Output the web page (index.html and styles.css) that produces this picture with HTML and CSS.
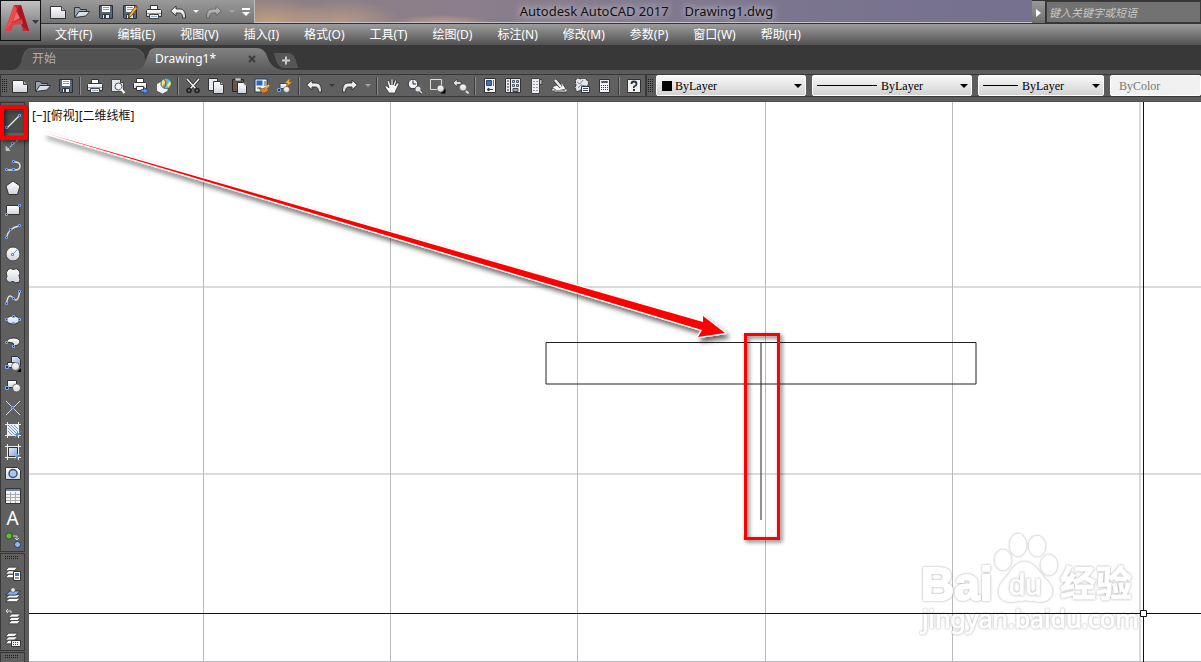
FILE: index.html
```html
<!DOCTYPE html>
<html lang="zh-CN">
<head>
<meta charset="utf-8">
<title>Autodesk AutoCAD 2017 - Drawing1.dwg</title>
<link rel="stylesheet" href="styles.css">
</head>
<body>
<svg class="sprite" aria-hidden="true">
  <defs>
    <linearGradient id="lg" x1="0" y1="0" x2="0" y2="1"><stop offset="0" stop-color="#fff"/><stop offset="1" stop-color="#cfd4dd"/></linearGradient>
    <linearGradient id="bl" x1="0" y1="0" x2="1" y2="1"><stop offset="0" stop-color="#e8f0fb"/><stop offset="1" stop-color="#7fa4dc"/></linearGradient>
  </defs>
  <symbol id="new" viewBox="0 0 16 16"><path d="M.5 2.500h11l4 4v8H.5z" fill="url(#lg)" stroke="#333"/><path d="M11.500 2.500v4h4" fill="#aaa" stroke="#444"/></symbol>
  <symbol id="open" viewBox="0 0 16 16"><path d="M.5 13V3.500h5l1 2h6v3" fill="#9da5b1" stroke="#30343a"/><path d="M.8 13.500l4-6h11l-4 4.500z" fill="#d9dfe8" stroke="#30343a"/></symbol>
  <symbol id="save" viewBox="0 0 16 16"><path d="M1.500 1.500h13v13h-12l-1-1z" fill="#596477" stroke="#292e37"/><path d="M4 2h8v6H4z" fill="#fff"/><path d="M5 3.500h6M5 5.500h6" stroke="#8e9cae"/><path d="M4.500 10.500h7v4h-7z" fill="#e5e9ef" stroke="#323844"/><path d="M6 11h2v3H6z" fill="#333b49"/></symbol>
  <symbol id="saveas" viewBox="0 0 16 16"><use href="#save" width="16" height="16"/><path d="M7 11l6.500-9 2.300 1.700L9 12.500l-2.500 1z" fill="#f4b33d" stroke="#643c12" stroke-width=".8"/><path d="M12.700 3l1.300-2 2 1.600-1.300 1.700z" fill="#c8442c"/></symbol>
  <symbol id="print" viewBox="0 0 16 16"><path d="M4.500 6V1.500h7V6" fill="#fff" stroke="#333"/><path d="M.5 6.500l1-1h13l1 1v6H.5z" fill="url(#lg)" stroke="#333"/><path d="M1 9.500h14" stroke="#8e96a3"/><path d="M3.500 10.500h9v4h-9z" fill="#eef3fa" stroke="#444"/><path d="M5 12.500h6" stroke="#8cacd8"/></symbol>
  <symbol id="preview" viewBox="0 0 16 16"><path d="M1.500 1.500h9l3 3v9h-12z" fill="#e3e6eb" stroke="#444"/><path d="M10.500 1.500v3h3" fill="#888" stroke="#333"/><circle cx="8.500" cy="8.500" r="3.500" fill="#edf3f9" stroke="#4c5157"/><path d="M11 11l3.500 4" stroke="#fff" stroke-width="2"/></symbol>
  <symbol id="publish" viewBox="0 0 16 16"><path d="M3.500 5V.5h7V5" fill="#fff" stroke="#333"/><path d="M.5 5.500l1-1h11l1 1v5H.5z" fill="url(#lg)" stroke="#333"/><path d="M3.500 8.500h7v4h-7z" fill="#fff" stroke="#333"/><path d="M8 11.500h3V9.500l4.500 3.500-4.500 3v-2H8z" fill="#5b95ed" stroke="#173e7b" stroke-width=".7"/></symbol>
  <symbol id="globe" viewBox="0 0 16 16"><path d="M.5 6l5-3 6.500 3v7l-5.500 3-6-3z" fill="#f3f5f8" stroke="#444" stroke-width=".7"/><circle cx="10" cy="5.500" r="5.200" fill="#4cc6d9" stroke="#31576d" stroke-width=".6"/><path d="M6 3q3-3 4-1l-1 3-3 3zm5 4l3-4 1 3-3 4z" fill="#ffe35a"/><path d="M8 1q4 4 0 9" fill="none" stroke="#e4472b" stroke-width="1.400"/></symbol>
  <symbol id="cut" viewBox="0 0 16 16"><path d="M2 1l9 10M14 1L5 11" stroke="#222" stroke-width="3"/><path d="M2 1l9 10M14 1L5 11" stroke="#eee" stroke-width="1.600"/><circle cx="4" cy="12.500" r="2" fill="none" stroke="#222" stroke-width="1.600"/><circle cx="12" cy="12.500" r="2" fill="none" stroke="#222" stroke-width="1.600"/></symbol>
  <symbol id="copy" viewBox="0 0 16 16"><path d="M.5.5h9v12h-9z" fill="#e8ebf0" stroke="#333"/><path d="M5.500 3.500h7l3 3v9h-10z" fill="url(#lg)" stroke="#333"/><path d="M12.500 3.500v3h3" fill="#bbb" stroke="#555"/></symbol>
  <symbol id="paste" viewBox="0 0 16 16"><path d="M1.500 1.500h11v12h-11z" fill="#665847" stroke="#28231f"/><path d="M4 0h6v3H4z" fill="#c8ccd2" stroke="#333" stroke-width=".6"/><path d="M6.500 4.500h6l3 3v8h-9z" fill="url(#lg)" stroke="#333"/><path d="M12.500 4.500v3h3" fill="#bbb"/></symbol>
  <symbol id="match" viewBox="0 0 16 16"><path d="M1 1h12v13H1z" fill="#f1f4f8" stroke="#24394c"/><path d="M2.500 2.500h6v5h-6z" fill="#286ac4"/><path d="M11 3v5M3 10h4" stroke="#315a7b"/><path d="M5 10q4 2 7-1l3 3q-3 4-7 3z" fill="#d88429" stroke="#81400e" stroke-width=".7"/><path d="M12 10l3-3" stroke="#efb35b" stroke-width="2"/></symbol>
  <symbol id="blockedit" viewBox="0 0 16 16"><path d="M3 5.500h7v5H3z" fill="url(#lg)" stroke="#444"/><circle cx="9.500" cy="11.500" r="3" fill="url(#lg)" stroke="#555" stroke-width=".6"/><path d="M.5 10.500h3v3h-3z" fill="#273b59" stroke="#68a2f2"/><path d="M13 0L8 5l3 .5L9 9l6-5h-3z" fill="#ffb629" stroke="#a5580c" stroke-width=".4"/></symbol>
  <symbol id="undo" viewBox="0 0 16 16"><path d="M.7 7L6 2v3h4q5 0 5.500 7v2h-3q0-5-3-5H6v3z" fill="url(#lg)" stroke="#303030" stroke-width=".9"/></symbol>
  <symbol id="redo" viewBox="0 0 16 16"><path d="M15.300 7L10 2v3H6Q1 5 .5 12v2h3q0-5 3-5H10v3z" fill="url(#lg)" stroke="#303030" stroke-width=".9"/></symbol>
  <symbol id="hand" viewBox="0 0 16 16"><path d="M5 15L1 9q0-2 2-1l2 2-2-7q1-2 2 0l2 4V1q1-1 2 0v6l2-5q2-1 1.500 1L11 8l2-3q2-1 2 1l-3 6-1 3z" fill="#f6f7f9" stroke="#353535" stroke-width=".8"/></symbol>
  <symbol id="zoomtime" viewBox="0 0 16 16"><circle cx="6" cy="6" r="4.800" fill="#eef1f5" stroke="#303030"/><path d="M6 2.500V6h3" fill="none" stroke="#222"/><path d="M9 9l6 6" stroke="#333" stroke-width="3"/><circle cx="11" cy="11" r="2.500" fill="#e3e7ed"/><path d="M12 12l3 3" stroke="#ddd" stroke-width="1.500"/></symbol>
  <symbol id="zoomwin" viewBox="0 0 16 16"><path d="M.5 1.500h11v10H.5z" fill="none" stroke="#ddd"/><path d="M15.500 10.500v5h-5z" fill="#000"/><circle cx="10.500" cy="10.500" r="3.500" fill="url(#lg)" stroke="#444" stroke-width=".6"/></symbol>
  <symbol id="zoomprev" viewBox="0 0 16 16"><path d="M0 5l4-4v2.500h4v3H4V9z" fill="#ddd" stroke="#333" stroke-width=".7"/><circle cx="10" cy="9.500" r="3.500" fill="url(#lg)" stroke="#444" stroke-width=".6"/><path d="M13 13l2.500 2.500" stroke="#ddd" stroke-width="2"/></symbol>
  <symbol id="props" viewBox="0 0 16 16"><path d="M2.500.5h11v14h-11z" fill="#f3f4f7" stroke="#333"/><path d="M4.500 2.500h5v5h-5z" fill="#3971be" stroke="#244b7f"/><path d="M11.500 2v6" stroke="#49709c"/><path d="M5 11.500h6M5 11.500l2-1.500v3z" fill="none" stroke="#333"/></symbol>
  <symbol id="center" viewBox="0 0 16 16"><path d="M.5.5h15v14H.5z" fill="#e7eaf0" stroke="#333"/><path d="M5.500 1v13M2 3h2M2 6h2M2 9h2M2 12h2" stroke="#333"/><path d="M7.500 2.500h2v2h-2zM11.500 2.500h2v2h-2zM7.500 6.500h2v2h-2zM11.500 6.500h2v2h-2z" fill="#bdc5d0" stroke="#4b5665"/><path d="M8 10.500h5v3H8z" fill="#8fa2ba" stroke="#444"/></symbol>
  <symbol id="palette" viewBox="0 0 16 16"><path d="M3.500.5h8v15h-8z" fill="#eceef1" stroke="#444"/><path d="M12 1.500h2v5h-2" fill="#bbb" stroke="#444"/><path d="M5 3.500h5M5 6.500h5M5 9.500h5M5 12.500h5" stroke="#999" stroke-dasharray="2 1"/></symbol>
  <symbol id="sheets" viewBox="0 0 16 16"><path d="M0 11l9-4 7 4v3H4z" fill="#e1e5eb" stroke="#333" stroke-width=".8"/><path d="M1 9l10-4 4 6-9 2z" fill="#f7f8fa" stroke="#444" stroke-width=".8"/><path d="M4 2l6 7" stroke="#333" stroke-width="4"/><path d="M4 2l6 7" stroke="#eee" stroke-width="2.500"/><path d="M1 12.500h13" stroke="#999"/></symbol>
  <symbol id="markup" viewBox="0 0 16 16"><path d="M1 2l3-2 3 1 3-1 3 2 2 3-2 3-3 5-4-1-3 2-2-4 1-3z" fill="#e2e5e9" stroke="#333" stroke-dasharray="3 1"/><path d="M3 4l3 2 3-4M4 10l3-3 5 1" stroke="#888" fill="none"/><path d="M7.500 8.500h8v6h-8z" fill="#f3f5f7" stroke="#333"/><path d="M9 10.500h5M9 12.500h5" stroke="#3e5267"/></symbol>
  <symbol id="calc" viewBox="0 0 16 16"><path d="M2.500 1.500h10v13h-10z" fill="#f0f1f4" stroke="#333"/><path d="M4.500 3.500h6v1h-6z" fill="#777" stroke="#555"/><path d="M4 7.500h7M4 9.500h7M4 11.500h7" stroke="#444" stroke-dasharray="1 1"/></symbol>
  <symbol id="help" viewBox="0 0 16 16"><path d="M1.500 1.500h13v13h-13z" fill="#eef0f3" stroke="#333"/><path d="M5.500 6q0-2.500 2.500-2.500T10.500 6q0 1.500-1.500 2T8 10" fill="none" stroke="#263240" stroke-width="1.800"/><path d="M7 11h2v2H7z" fill="#263240"/></symbol>

  <symbol id="line" viewBox="0 0 16 16"><path d="M2 14L14 2" stroke="#eee" stroke-width="1.300"/><path d="M.5 12.500h2v2h-2zM13.500.5h2v2h-2z" fill="#28466e" stroke="#76a7ef"/></symbol>
  <symbol id="ray" viewBox="0 0 16 16"><path d="M2 14L15 2" stroke="#ddd" stroke-dasharray="3 1"/><path d="M1 10.500v4h4z" fill="#ccc" stroke="#bbb"/><path d="M12 1.500h2.500V4" fill="none" stroke="#ccc"/><path d="M6.500 6.500h2v2h-2z" fill="#17365f" stroke="#76a7ef"/></symbol>
  <symbol id="poly" viewBox="0 0 16 16"><path d="M1 12h9q5 0 5-4t-5-4H8" fill="none" stroke="#ddd" stroke-width="1.500"/><path d="M.5 10.500h2v2h-2zM7.500 10.500h2v2h-2zM7.500 2.500h2v2h-2z" fill="#17365f" stroke="#76a7ef"/></symbol>
  <symbol id="penta" viewBox="0 0 16 16"><path d="M8 1l7 5-2.500 8.500h-9L1 6z" fill="url(#lg)" stroke="#333"/></symbol>
  <symbol id="rect" viewBox="0 0 16 16"><path d="M1.500 3.500h13v9h-13z" fill="url(#lg)" stroke="#333"/><path d="M.5 11.500h2v2h-2zM13.500 2.500h2v2h-2z" fill="#17365f" stroke="#76a7ef"/></symbol>
  <symbol id="arc" viewBox="0 0 16 16"><path d="M1.500 14Q3 4 14 2" fill="none" stroke="#ddd" stroke-width="1.500"/><path d="M.5 12.500h2v2h-2zM4.500 4.500h2v2h-2zM13.500.5h2v2h-2z" fill="#17365f" stroke="#76a7ef"/></symbol>
  <symbol id="circle" viewBox="0 0 16 16"><circle cx="8" cy="8" r="7" fill="url(#lg)" stroke="#444"/><path d="M8 8l4-4" stroke="#568ee0"/><path d="M6.500 7.500h2v2h-2z" fill="#fff" stroke="#568ee0"/></symbol>
  <symbol id="cloud" viewBox="0 0 16 16"><path d="M3 1.500q3-2 5 0 4-2 6 1 2 3 0 5 2 5 0 7-4 1-6-1-4 2-6-.5-2-2.500 0-4.500-2-4 1-7z" fill="url(#lg)" stroke="#333"/></symbol>
  <symbol id="spline" viewBox="0 0 16 16"><path d="M1.500 14Q3 2 8 8t6.500-6" fill="none" stroke="#ddd" stroke-width="1.500"/><path d="M.5 12.500h2v2h-2zM7.500 7.500h2v2h-2zM13.500.5h2v2h-2z" fill="#17365f" stroke="#76a7ef"/></symbol>
  <symbol id="ellipse" viewBox="0 0 16 16"><ellipse cx="8" cy="8" rx="6.500" ry="4" fill="url(#lg)" stroke="#333"/><path d="M.5 6.500h2v2h-2zM13.500 6.500h2v2h-2zM7.500 3.500h2v2h-2zM7.500 10.500h2v1h-2z" fill="#17365f" stroke="#76a7ef"/></symbol>
  <symbol id="ellarc" viewBox="0 0 16 16"><path d="M1.500 8q1-4 7-4t6.500 4q-1 4-6 4l-1-3z" fill="url(#lg)" stroke="#333"/><path d="M.5 7.500h2v2h-2zM7.500 11.500h2v2h-2z" fill="#17365f" stroke="#76a7ef"/></symbol>
  <symbol id="insert" viewBox="0 0 16 16"><path d="M6.500.5h6l3 3v7h-9z" fill="url(#bl)" stroke="#333"/><path d="M2.500 6.500h7v5h-7z" fill="url(#lg)" stroke="#333"/><circle cx="10.500" cy="10.500" r="4" fill="url(#lg)" stroke="#444" stroke-width=".7"/><path d="M.5 9.500h3v3h-3z" fill="#17365f" stroke="#76a7ef"/><path d="M16 12v4h-4z"/></symbol>
  <symbol id="block" viewBox="0 0 16 16"><path d="M2.500 2.500h9v7h-9z" fill="url(#lg)" stroke="#333"/><circle cx="11.500" cy="10" r="4" fill="url(#lg)" stroke="#444" stroke-width=".7"/><path d="M.5 8.500h3v3h-3z" fill="#17365f" stroke="#76a7ef"/></symbol>
  <symbol id="point" viewBox="0 0 16 16"><path d="M1 1l14 14M15 1L1 15" stroke="#ddd"/><path d="M6.500 6.500h2v2h-2z" fill="#38648c" stroke="#76a7ef"/></symbol>
  <symbol id="hatch" viewBox="0 0 16 16"><path d="M2.500 2.500h11v11h-11z" fill="#edf2fb" stroke="#333"/><path d="M3 3l10 10M6 3l7 7M3 6l7 7M9 3l4 4M3 9l4 4" stroke="#6d94d2"/><path d="M2.500 0v16M13.500 0v16M0 2.500h16M0 13.500h16" stroke="#ececec"/><path d="M9 16l7-7M12.500 10v5M10 12.500h5" stroke="#4d91e9"/></symbol>
  <symbol id="gradient" viewBox="0 0 16 16"><path d="M3.500 3.500h9v9h-9z" fill="url(#bl)" stroke="#333"/><path d="M2.500 0v16M13.500 0v16M0 2.500h16M0 13.500h16" stroke="#ececec"/><path d="M9 16l7-7M12.500 10v5M10 12.500h5" stroke="#4d91e9"/></symbol>
  <symbol id="region" viewBox="0 0 16 16"><path d="M.5 1.500h12l3 3v9H.5z" fill="url(#lg)" stroke="#333"/><circle cx="8" cy="7.500" r="4" fill="#a9c6ed" stroke="#344f78" stroke-width="1.500"/></symbol>
  <symbol id="table" viewBox="0 0 16 16"><path d="M.5.5h15v15H.5z" fill="#f2f4f6" stroke="#333"/><path d="M1 1h14v2H1z" fill="#6d84a6"/><path d="M1 6.500h14M1 9.500h14M1 12.500h14M5.500 4v11M10.500 4v11" stroke="#aaa"/></symbol>
  <symbol id="addsel" viewBox="0 0 16 16"><circle cx="4" cy="4" r="3.200" fill="#5ebc3a" stroke="#235714"/><path d="M8 4h4v4m-2-2l2 2 2-2" fill="none" stroke="#ccc"/><circle cx="12.500" cy="12.500" r="3" fill="#8bbdf6" stroke="#263a58"/></symbol>
  <symbol id="stack" viewBox="0 0 16 16" preserveAspectRatio="none"><path d="M.5 14.500l4-4h11l-4 4zM.5 10.500l4-4h11l-4 4zM.5 6.500l4-4h11l-4 4z" fill="#fafafa" stroke="#292929" stroke-width=".8"/></symbol>
  <symbol id="layprops" viewBox="0 0 16 16"><use href="#stack" width="13" height="14"/><path d="M8.500 6.500h7v9h-7z" fill="#fff" stroke="#333"/><path d="M10 8h4v3h-4z" fill="#3b79c8"/><path d="M10 13h4" stroke="#333"/></symbol>
  <symbol id="laycur" viewBox="0 0 16 16"><use href="#stack" y="2" width="16" height="14"/><path d="M1 8l4-4h10l-4 4z" fill="#7fb0ef" stroke="#243c60" stroke-width=".8"/><circle cx="8" cy="3" r="2.300" fill="#e6e6e6" stroke="#444" stroke-width=".6"/></symbol>
  <symbol id="layprev" viewBox="0 0 16 16"><use href="#stack" x="3" y="3" width="13" height="13"/><path d="M6 4V2H1m2-2L1 2l2 2" fill="none" stroke="#ddd"/></symbol>
  <symbol id="laystate" viewBox="0 0 16 16"><use href="#stack" width="13" height="14"/><path d="M6.500 9.500h9v6h-9z" fill="#f4f5f7" stroke="#333"/><path d="M8 11.500h6M8 13.500h6" stroke="#444" stroke-dasharray="1 1"/></symbol>
</svg>

<header class="header">
  <button class="app-button" aria-label="应用程序菜单">
    <svg width="36" height="34" viewBox="0 0 36 34"><path d="M2 27L11 1h7l8 26h-6l-2-8-8 1-2 7z" fill="#cb2630"/><path d="M11 1l3 4-6 17-6 5z" fill="#ed4b4e"/><path d="M14 5l4-4 8 26-7-5z" fill="#a91520"/><path d="M2 27l7-8 10-4 1 5-10 1-2 6zM10 17l4-10 3 7z" fill="#df4141"/><path d="M13 8l-3 10 7-4z" fill="#fff" opacity=".25"/><path d="M29 16h7l-3.500 4z" fill="#343c47"/></svg>
  </button>
  <div class="titlebar">
    <div class="quick">
      <button aria-label="新建"><svg class="icon"><use href="#new"/></svg></button>
      <button aria-label="打开"><svg class="icon"><use href="#open"/></svg></button>
      <button aria-label="保存"><svg class="icon"><use href="#save"/></svg></button>
      <button aria-label="另存为"><svg class="icon"><use href="#saveas"/></svg></button>
      <button aria-label="打印"><svg class="icon"><use href="#print"/></svg></button>
      <button aria-label="放弃"><svg class="icon"><use href="#undo"/></svg></button>
      <button class="drop light" aria-label="放弃列表"></button>
      <button class="faded" aria-label="重做"><svg class="icon"><use href="#redo"/></svg></button>
      <button class="drop dim" aria-label="重做列表"></button>
      <button class="more" aria-label="自定义快速访问工具栏"><svg width="8" height="8"><path d="M0 0h8v2H0zM0 4h8L4 8z" fill="#fff"/></svg></button>
    </div>
    <h1 class="title"><span>Autodesk AutoCAD 2017</span><span>Drawing1.dwg</span></h1>
    <div class="search">
      <button aria-label="展开搜索"><svg width="5" height="8"><path d="M0 0l5 4-5 4z" fill="#fff"/></svg></button>
      <input type="text" aria-label="搜索" placeholder="键入关键字或短语">
    </div>
  </div>
  <nav class="menu">
    <button>文件(F)</button><button>编辑(E)</button><button>视图(V)</button><button>插入(I)</button><button>格式(O)</button><button>工具(T)</button><button>绘图(D)</button><button>标注(N)</button><button>修改(M)</button><button>参数(P)</button><button>窗口(W)</button><button>帮助(H)</button>
  </nav>
</header>

<div class="tabs">
  <button class="tab"><svg class="tab-shape" viewBox="0 0 148 22" preserveAspectRatio="none"><path d="M0 22Q7 21 10 12L13 4Q15 0 20 0H122Q130 0 132 8L138 22Z" fill="#525252"/><path d="M10 12L13 4Q15 .5 20 .5H122Q130 1 132 8" fill="none" stroke="#606060"/></svg><span>开始</span></button>
  <button class="tab active"><svg class="tab-shape" viewBox="0 0 148 22" preserveAspectRatio="none"><defs><linearGradient id="tg" x1="0" y1="0" x2="0" y2="1"><stop offset="0" stop-color="#828282"/><stop offset="1" stop-color="#5c5c5c"/></linearGradient></defs><path d="M0 22Q7 21 9 12L12 4Q14 0 19 0H120Q127 0 130 8Q134 21 146 22Z" fill="url(#tg)"/></svg><span>Drawing1*</span><svg class="close" width="8" height="8"><path d="M1 1l6 6M7 1L1 7" stroke="#3c3c3c" stroke-width="2"/></svg></button>
  <button class="add" aria-label="新图形"><svg width="24" height="16"><path d="M0 0H14Q20 0 22 8L24 15H10Q3 15 0 0Z" fill="#565656"/><path d="M8 7.500h8M12 3.500v8" stroke="#ccc" stroke-width="2"/></svg></button>
</div>

<div class="toolbar">
  <div class="tools">
    <i class="grip"></i>
    <button aria-label="新建"><svg class="icon"><use href="#new"/></svg></button>
    <button aria-label="打开"><svg class="icon"><use href="#open"/></svg></button>
    <button aria-label="保存"><svg class="icon"><use href="#save"/></svg></button>
    <i class="sep"></i>
    <button aria-label="打印"><svg class="icon"><use href="#print"/></svg></button>
    <button aria-label="打印预览"><svg class="icon"><use href="#preview"/></svg></button>
    <button aria-label="发布"><svg class="icon"><use href="#publish"/></svg></button>
    <button aria-label="三维打印"><svg class="icon"><use href="#globe"/></svg></button>
    <i class="sep"></i>
    <button aria-label="剪切"><svg class="icon"><use href="#cut"/></svg></button>
    <button aria-label="复制"><svg class="icon"><use href="#copy"/></svg></button>
    <button aria-label="粘贴"><svg class="icon"><use href="#paste"/></svg></button>
    <button aria-label="特性匹配"><svg class="icon"><use href="#match"/></svg></button>
    <button aria-label="块编辑器"><svg class="icon"><use href="#blockedit"/></svg></button>
    <i class="sep"></i>
    <button aria-label="放弃"><svg class="icon"><use href="#undo"/></svg></button>
    <button class="drop" aria-label="放弃列表"></button>
    <button aria-label="重做"><svg class="icon"><use href="#redo"/></svg></button>
    <button class="drop dim" aria-label="重做列表"></button>
    <i class="sep"></i>
    <button aria-label="平移"><svg class="icon"><use href="#hand"/></svg></button>
    <button aria-label="实时缩放"><svg class="icon"><use href="#zoomtime"/></svg></button>
    <button aria-label="窗口缩放"><svg class="icon"><use href="#zoomwin"/></svg></button>
    <button aria-label="缩放上一个"><svg class="icon"><use href="#zoomprev"/></svg></button>
    <i class="sep"></i>
    <button aria-label="特性"><svg class="icon"><use href="#props"/></svg></button>
    <button aria-label="设计中心"><svg class="icon"><use href="#center"/></svg></button>
    <button aria-label="工具选项板"><svg class="icon"><use href="#palette"/></svg></button>
    <button aria-label="图纸集"><svg class="icon"><use href="#sheets"/></svg></button>
    <button aria-label="标记集"><svg class="icon"><use href="#markup"/></svg></button>
    <button aria-label="计算器"><svg class="icon"><use href="#calc"/></svg></button>
    <i class="sep"></i>
    <button aria-label="帮助"><svg class="icon"><use href="#help"/></svg></button>
  </div>
  <div class="properties">
    <i class="grip"></i>
    <label class="pick color"><i class="swatch"></i><select aria-label="颜色"><option>ByLayer</option></select></label>
    <label class="pick linetype"><i class="stroke"></i><select aria-label="线型"><option>ByLayer</option></select></label>
    <label class="pick weight"><i class="stroke"></i><select aria-label="线宽"><option>ByLayer</option></select></label>
    <label class="pick plot"><select aria-label="打印样式" disabled><option>ByColor</option></select></label>
  </div>
</div>

<main class="workspace">
  <aside class="side">
    <div class="panel">
      <i class="grip-h"></i>
      <button class="on" aria-label="直线"><svg class="icon"><use href="#line"/></svg></button>
      <button aria-label="构造线"><svg class="icon"><use href="#ray"/></svg></button>
      <button aria-label="多段线"><svg class="icon"><use href="#poly"/></svg></button>
      <button aria-label="多边形"><svg class="icon"><use href="#penta"/></svg></button>
      <button aria-label="矩形"><svg class="icon"><use href="#rect"/></svg></button>
      <button aria-label="圆弧"><svg class="icon"><use href="#arc"/></svg></button>
      <button aria-label="圆"><svg class="icon"><use href="#circle"/></svg></button>
      <button aria-label="修订云线"><svg class="icon"><use href="#cloud"/></svg></button>
      <button aria-label="样条曲线"><svg class="icon"><use href="#spline"/></svg></button>
      <button aria-label="椭圆"><svg class="icon"><use href="#ellipse"/></svg></button>
      <button aria-label="椭圆弧"><svg class="icon"><use href="#ellarc"/></svg></button>
      <button aria-label="插入块"><svg class="icon"><use href="#insert"/></svg></button>
      <button aria-label="创建块"><svg class="icon"><use href="#block"/></svg></button>
      <button aria-label="点"><svg class="icon"><use href="#point"/></svg></button>
      <button aria-label="图案填充"><svg class="icon"><use href="#hatch"/></svg></button>
      <button aria-label="渐变色"><svg class="icon"><use href="#gradient"/></svg></button>
      <button aria-label="面域"><svg class="icon"><use href="#region"/></svg></button>
      <button aria-label="表格"><svg class="icon"><use href="#table"/></svg></button>
      <button class="letter" aria-label="多行文字">A</button>
      <button aria-label="添加选定对象"><svg class="icon"><use href="#addsel"/></svg></button>
    </div>
    <div class="panel">
      <i class="grip-h"></i>
      <button aria-label="图层特性"><svg class="icon"><use href="#layprops"/></svg></button>
      <button aria-label="置为当前"><svg class="icon"><use href="#laycur"/></svg></button>
      <button aria-label="上一个图层"><svg class="icon"><use href="#layprev"/></svg></button>
      <button aria-label="图层状态"><svg class="icon"><use href="#laystate"/></svg></button>
    </div>
    <div class="panel"><i class="grip-h"></i><button aria-label="更多"></button></div>
    <div class="highlight"></div>
  </aside>
  <section class="canvas">
    <svg class="drawing" role="img" aria-label="图形">
      <defs><filter id="sh" x="-20%" y="-20%" width="140%" height="140%"><feDropShadow dx="3" dy="4" stdDeviation="2.500" flood-color="#000" flood-opacity=".6"/></filter>
      <filter id="sb" x="-50%" y="-20%" width="200%" height="140%"><feDropShadow dx="2" dy="2" stdDeviation="2" flood-color="#000" flood-opacity=".6"/></filter></defs>
      <g transform="translate(-29 -102)">
        <path d="M203.500 102V2000M390.500 102V2000M577.500 102V2000M765.500 102V2000M952.500 102V2000M1140 102V2000M29 287H4000M29 474H4000M29 661.500H4000" stroke="#b9b9bf"/>
        <g class="watermark">
          <ellipse cx="1003" cy="560" rx="8" ry="10"/><ellipse cx="1018" cy="545" rx="8" ry="11"/><ellipse cx="1037" cy="546" rx="8" ry="10"/><ellipse cx="1049" cy="565" rx="8" ry="10"/>
          <text class="wm-logo" x="921" y="600">Bai</text>
          <path d="M1024 562C1017 562 1013 568 1009 574C1004 580 999 585 999 591C999 601 1008 603 1016 601Q1026 599 1035 601C1044 603 1052 600 1052 591C1052 584 1045 580 1041 574C1036 567 1031 562 1024 562Z"/>
          <text class="wm-du" x="1009" y="595">du</text>
          <text class="wm-cn" x="1060" y="597">经验</text>
          <text class="wm-url" x="922" y="628">jingyan.baidu.com</text>
        </g>
        <path d="M546 342.500H976V384H546ZM761 342.500V520" fill="none" stroke="#222"/>
        <path d="M1143.500 102V2000M29 613.500H4000" stroke="#111"/>
        <path d="M1140.500 610.500h6v6h-6z" fill="#fff" stroke="#111"/>
        <path d="M45 133L703 322L703 316L725 333L698 337L702 330Z" fill="#f00" stroke="#fff" stroke-width="2.500" stroke-linejoin="round" paint-order="stroke" filter="url(#sh)"/>
        <path d="M745.500 334.500H778.500V538.500H745.500Z" fill="none" stroke="#f00" stroke-width="3" filter="url(#sb)"/>
      </g>
    </svg>
    <p class="viewport-label">[−][俯视][二维线框]</p>
  </section>
</main>
</body>
</html>
```
FILE: styles.css
```css
* { box-sizing: border-box; }
body {
  margin: 0;
  height: 100vh;
  display: flex;
  flex-direction: column;
  overflow: hidden;
  background: #5c5c5c;
  font: 12px "Noto Sans", "Noto Sans CJK SC", sans-serif;
}
button { margin: 0; padding: 0; border: 0; background: none; color: inherit; font: inherit; flex: none; }
.sprite { position: absolute; width: 0; height: 0; }
.icon { display: block; width: 16px; height: 16px; margin: auto; }

/* Title bar and menu */
.header { flex: none; display: grid; grid-template-columns: 41px 1fr; grid-template-rows: 24px 21px; background: #333; }
.app-button {
  grid-area: 1 / 1 / 3 / 2;
  z-index: 1;
  height: 41px;
  border: 1px solid #111;
  background: linear-gradient(#c2c2c2, #909090 50%, #646464);
}
.app-button svg { display: block; margin: auto; }
.titlebar {
  grid-area: 1 / 2;
  display: flex;
  border-bottom: 1px solid #333;
  background:
    radial-gradient(ellipse 60px 26px at 230px 24px, #c5a27c, transparent),
    radial-gradient(ellipse 60px 22px at 300px 22px, #b59a88, transparent),
    radial-gradient(ellipse 50px 8px at 400px 23px, #c4a08c, transparent),
    linear-gradient(90deg, #8d7f83 200px, #8c7e8a 420px, #7c768f 700px, #716d8e);
}
.quick { flex: none; width: 214px; display: flex; align-items: center; padding-left: 5px; background: linear-gradient(#9a9a9a, #757575); border-right: 1px solid #bbb; }
.quick button { width: 24px; }
.quick .drop { width: 12px; }
.quick .faded { opacity: .4; }
.quick .more { width: 15px; }
.more svg { display: block; margin: auto; }
.drop::before { content: ""; display: block; width: 0; margin: auto; border: 3px solid transparent; border-top-color: #333b45; border-bottom: 0; }
.drop.light::before { border-top-color: #eee; }
.drop.dim::before { border-top-color: #a5a5a5; }
.title {
  flex: 1;
  margin: 0;
  display: flex;
  justify-content: center;
  gap: 16px;
  padding-left: 6px;
  border-bottom: 1px solid #c9c2ca;
  font-size: 12px;
  font-weight: 400;
  font-size: 13px;
  line-height: 23px;
  color: #111;
  text-shadow: 0 0 6px #ccc8d4, 0 0 10px #ccc8d4;
}
.search { flex: none; width: 169px; display: flex; background: #333; gap: 1px; padding: 1px 0 0; }
.search button { width: 13px; background: linear-gradient(#999, #6f6f6f); }
.search input { flex: 1; min-width: 0; padding: 0 2px; border: 1px solid #3c3c3c; background: #727272; font: italic 11px "Noto Sans CJK SC", sans-serif; color: #fff; }
.search input::placeholder { color: #c8c8c8; opacity: 1; }
.menu {
  grid-area: 2 / 1 / 3 / 3;
  display: flex;
  gap: 25px;
  padding-left: 55px;
  background: linear-gradient(#9c9c9c, #525252);
  color: #fff;
  line-height: 20px;
}

/* File tabs */
.tabs { flex: none; height: 25px; display: flex; align-items: flex-end; padding-left: 12px; background: #383838; color: #ccc; }
.tab { position: relative; width: 125px; height: 22px; padding-left: 20px; text-align: left; line-height: 22px; color: #b0b0b0; }
.tab-shape { position: absolute; left: 0; top: 0; width: 148px; height: 22px; }
.tab span { position: relative; }
.tab.active { display: flex; align-items: center; justify-content: space-between; width: 137px; padding: 0 18px; color: #fff; }
.close { position: relative; }
.add { height: 18px; }
.add svg { display: block; }

/* Main toolbar */
.toolbar { flex: none; height: 32px; display: flex; padding: 4px 0; background: #5c5c5c; border-bottom: 1px solid #505050; }
.tools { flex: none; width: 647px; display: flex; align-items: center; border: 1px solid #383838; border-right-width: 2px; background: #606060; }
.tools button { width: 23px; }
.tools .drop { width: 13px; }
.grip, .grip-h {
  background:
    repeating-linear-gradient(transparent 0 1px, #606060 1px 2px),
    repeating-linear-gradient(90deg, #1c1c1c 0 1px, #606060 1px 2px);
}
.grip { flex: none; width: 5px; height: 14px; margin: 0 1px; }
.sep { flex: none; width: 2px; height: 18px; margin: 0 2px; border-left: 1px solid #3c3c3c; border-right: 1px solid #8b8b8b; }
.properties { flex: 1; min-width: 0; display: flex; align-items: center; gap: 6px; overflow: hidden; border: 1px solid #383838; border-width: 1px 0; }
.properties .grip { margin: 0 -3px 0 1px; }
.pick { position: relative; flex: none; display: flex; align-items: center; height: 21px; border: 1px solid #fff; border-radius: 2px; background: linear-gradient(#f8f8f8, #d2d2d2); }
.pick select { appearance: none; width: 100%; height: 100%; border: 0; padding: 0; background: none; font: 12px "Liberation Serif", serif; color: #000; }
.pick i { position: absolute; pointer-events: none; background: #000; }
.pick:not(.plot)::after { content: ""; position: absolute; right: 3px; border: 4px solid transparent; border-top-color: #000; border-bottom: 0; }
.color { width: 150px; }
.color select { padding-left: 18px; }
.swatch { left: 5px; width: 10px; height: 10px; }
.linetype { width: 160px; }
.linetype select { padding-left: 68px; }
.stroke { left: 4px; height: 1px; }
.linetype .stroke { width: 60px; }
.weight { width: 126px; }
.weight select { padding-left: 43px; }
.weight .stroke { width: 35px; }
.pick.plot { flex: 1; background: #f1f1f1; }
.plot select { padding-left: 8px; color: #777; opacity: 1; }

/* Workspace */
.workspace { flex: 1; min-height: 0; display: flex; }
.side { position: relative; flex: none; width: 29px; background: #5c5c5c; }
.panel { width: 25px; margin-bottom: 1px; border: 1px solid #383838; background: #606060; }
.panel button { display: block; width: 23px; height: 22px; }
.grip-h { display: block; width: 13px; height: 3px; margin: 2px 4px 3px; }
.panel .on { background: #4c4c4c; }
.panel .letter { font: 19px/22px "Noto Sans", sans-serif; color: #fff; }
.highlight { position: absolute; left: 0; top: 3px; width: 28px; height: 35px; border: 4px solid #f00; box-shadow: 2px 2px 4px #0008, inset 2px 2px 4px #0008; }
.canvas { position: relative; flex: 1; min-width: 0; background: #fff; overflow: hidden; }
.drawing { position: absolute; left: 0; top: 0; width: 100%; height: 100%; }
.viewport-label { position: relative; margin: 0; padding: 5px 3px; font-size: 12px; line-height: 18px; color: #111; }
.watermark { fill: #fff; stroke: #fff; stroke-linejoin: round; opacity: .9; }
.watermark > * { filter: drop-shadow(0 0 1px #999); }
.wm-logo { font: bold 46px "Liberation Sans", sans-serif; stroke-width: 2px; }
.wm-du { font: 29px "Liberation Sans", sans-serif; }
.wm-cn { font: bold 36px "Noto Sans CJK SC", sans-serif; }
.wm-url { font: 25px "Noto Sans", sans-serif; }
```
